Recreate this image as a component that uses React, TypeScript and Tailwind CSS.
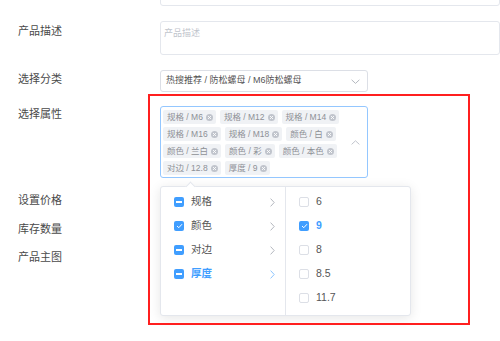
const tags = [
  '规格 / M6',
  '规格 / M12',
  '规格 / M14',
  '规格 / M16',
  '规格 / M18',
  '颜色 / 白',
  '颜色 / 兰白',
  '颜色 / 彩',
  '颜色 / 本色',
  '对边 / 12.8',
  '厚度 / 9',
]

const groups = [
  { name: '规格', state: 'half' },
  { name: '颜色', state: 'on' },
  { name: '对边', state: 'half' },
  { name: '厚度', state: 'half', active: true },
]

const values = [
  { v: '6', on: false },
  { v: '9', on: true },
  { v: '8', on: false },
  { v: '8.5', on: false },
  { v: '11.7', on: false },
  { v: '', on: false },
]

function CloseDot() {
  return (
    <svg width="7" height="7" viewBox="0 0 8 8" className="ml-[3px] shrink-0">
      <circle cx="4" cy="4" r="4" fill="#c0c4cc" />
      <path d="M2.6 2.6 L5.4 5.4 M5.4 2.6 L2.6 5.4" stroke="#fff" strokeWidth="1" strokeLinecap="round" />
    </svg>
  )
}

function Chevron({ dir, color = '#b4b8bf' }: { dir: 'down' | 'up' | 'right'; color?: string }) {
  if (dir === 'right') {
    return (
      <svg width="5" height="9" viewBox="0 0 5 9">
        <path d="M0.6 0.6 L4.2 4.5 L0.6 8.4" fill="none" stroke={color} strokeWidth="1" />
      </svg>
    )
  }
  const d = dir === 'down' ? 'M0.6 0.8 L4.5 4.4 L8.4 0.8' : 'M0.6 4.4 L4.5 0.8 L8.4 4.4'
  return (
    <svg width="9" height="5" viewBox="0 0 9 5">
      <path d={d} fill="none" stroke={color} strokeWidth="1" />
    </svg>
  )
}

function Box({ state }: { state: 'on' | 'half' | 'off' }) {
  if (state === 'off') {
    return <span className="w-[10px] h-[10px] rounded-[2px] border border-[#dcdfe6] bg-white shrink-0" />
  }
  return (
    <span className="w-[10px] h-[10px] rounded-[2px] bg-[#409eff] flex items-center justify-center shrink-0">
      {state === 'half' ? (
        <span className="w-[6px] h-[1.5px] bg-white" />
      ) : (
        <svg width="7" height="6" viewBox="0 0 7 6">
          <path d="M1 3 L2.8 4.7 L6 1.2" fill="none" stroke="#fff" strokeWidth="1" />
        </svg>
      )}
    </span>
  )
}

export default function App() {
  return (
    <div className="relative w-[500px] h-[341px] overflow-hidden bg-white font-['Liberation_Sans','Noto_Sans_CJK_SC',sans-serif] text-[#4a4a4a]">
      <div className="flex flex-col">
        <div className="flex">
          <div className="w-[160px]" />
          <div className="flex-1 h-[26px] -mt-[20px] border border-[#e4e7ed] rounded-[3px]" />
        </div>

        <div className="flex mt-[15px]">
          <div className="w-[160px] pl-[18px] pt-[2px] text-[11px] leading-[16px]">产品描述</div>
          <div className="flex-1 h-[34px] border border-[#e4e7ed] rounded-[3px] px-[3px] pt-[5px] text-[9px] leading-[12px] text-[#c0c4cc]">
            产品描述
          </div>
        </div>

        <div className="flex mt-[15px]">
          <div className="w-[160px] pl-[18px] pt-[1px] text-[11px] leading-[16px]">选择分类</div>
          <div className="w-[208px] h-[22px] border border-[#dcdfe6] rounded-[3px] flex items-center justify-between pl-[5px] pr-[7px] text-[9px] text-[#555]">
            <span>热搜推荐 / 防松螺母 / M6防松螺母</span>
            <Chevron dir="down" />
          </div>
        </div>

        <div className="flex mt-[14px]">
          <div className="w-[160px] pl-[18px] pt-[0px] text-[11px] leading-[16px]">选择属性</div>
          <div className="relative">
            <div className="w-[208px] h-[72px] border border-[#94c7ff] rounded-[3px] flex items-center pl-[2px] pr-[7px]">
              <div className="flex flex-wrap gap-x-[4px] gap-y-[3px] w-[190px] self-start pt-[3px]">
                {tags.map((t) => (
                  <span
                    key={t}
                    className="h-[14px] pl-[4px] pr-[3px] bg-[#f0f2f5] rounded-[2px] flex items-center text-[8.5px] text-[#8d9095] leading-none"
                  >
                    {t}
                    <CloseDot />
                  </span>
                ))}
              </div>
              <div className="ml-auto">
                <Chevron dir="up" color="#c0c4cc" />
              </div>
            </div>

            <div className="absolute left-0 top-[80px] z-10 w-[251px] h-[130px] bg-white border border-[#e4e7ed] rounded-[3px] shadow-[0_2px_12px_rgba(0,0,0,0.1)] flex">
              <span className="absolute -top-[4px] left-[26px] w-[7px] h-[7px] rotate-45 bg-white border-l border-t border-[#e4e7ed]" />
              <div className="w-[125px] border-r border-[#e4e7ed] pt-[3px]">
                {groups.map((g) => (
                  <div key={g.name} className="h-[24px] flex items-center pl-[13px] pr-[10px]">
                    <Box state={g.state as 'on' | 'half'} />
                    <span className={`ml-[7px] text-[10.5px] ${g.active ? 'text-[#409eff] font-bold' : 'text-[#555]'}`}>{g.name}</span>
                    <span className="ml-auto">
                      <Chevron dir="right" color={g.active ? '#8cc5ff' : '#b4b8bf'} />
                    </span>
                  </div>
                ))}
              </div>
              <div className="flex-1 overflow-hidden pt-[3px]">
                {values.map((v, i) => (
                  <div key={i} className="h-[24px] flex items-center pl-[13px]">
                    <Box state={v.on ? 'on' : 'off'} />
                    <span className={`ml-[7px] text-[10.5px] ${v.on ? 'text-[#409eff] font-bold' : 'text-[#555]'}`}>{v.v}</span>
                  </div>
                ))}
              </div>
            </div>
          </div>
        </div>

        <div className="pl-[18px] mt-[14px] text-[11px] leading-[16px]">设置价格</div>
        <div className="pl-[18px] mt-[13px] text-[11px] leading-[16px]">库存数量</div>
        <div className="pl-[18px] mt-[12px] text-[11px] leading-[16px]">产品主图</div>
      </div>

      <div className="absolute left-[148px] top-[94px] w-[322px] h-[231px] border-2 border-[#ff1f1f] z-20 pointer-events-none" />
    </div>
  )
}
